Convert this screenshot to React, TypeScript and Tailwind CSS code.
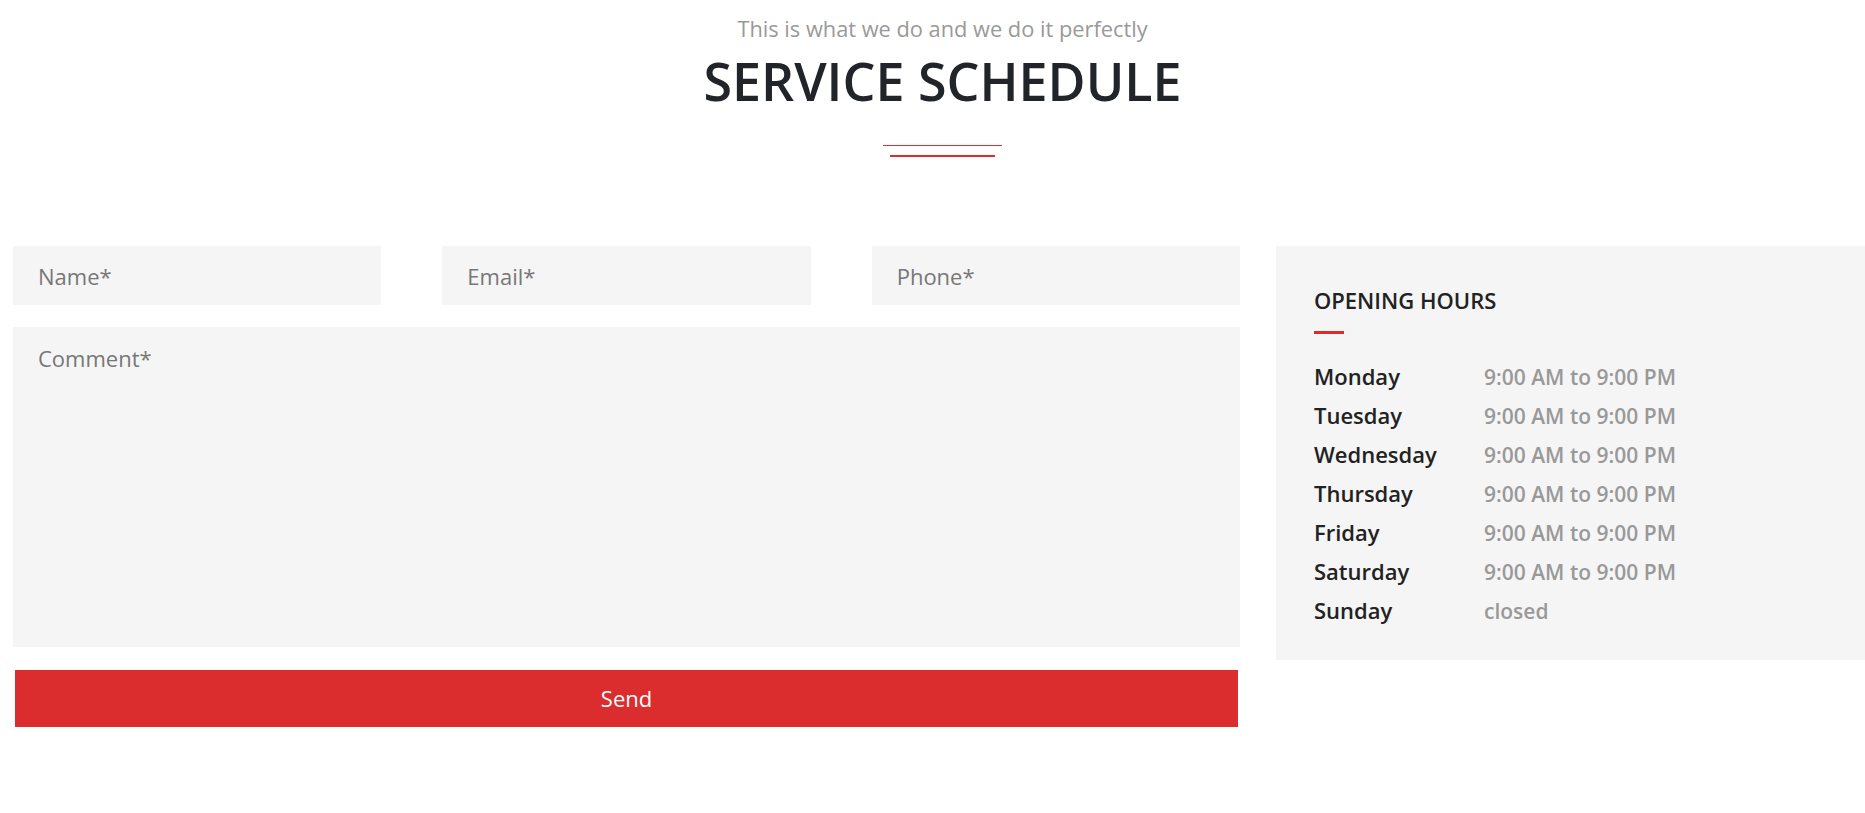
import React from "react";

const hours = [
  { day: "Monday", time: "9:00 AM to 9:00 PM" },
  { day: "Tuesday", time: "9:00 AM to 9:00 PM" },
  { day: "Wednesday", time: "9:00 AM to 9:00 PM" },
  { day: "Thursday", time: "9:00 AM to 9:00 PM" },
  { day: "Friday", time: "9:00 AM to 9:00 PM" },
  { day: "Saturday", time: "9:00 AM to 9:00 PM" },
  { day: "Sunday", time: "closed" },
];

const fieldClass =
  "w-full h-[59px] px-[25px] bg-[#f5f5f5] text-[22px] text-[#333] placeholder:text-[#777] outline-none";

export default function App() {
  return (
    <div className="w-full min-h-[813px] bg-white overflow-hidden font-['Open_Sans','Liberation_Sans',sans-serif]">
      {/* Section heading */}
      <div className="pl-[20px] pt-[15px] text-center">
        <p className="text-[21.8px] leading-[28px] text-[#999]">This is what we do and we do it perfectly</p>
        <h2 className="mt-[11px] text-[52px] leading-[54px] text-[#212529] font-semibold">SERVICE SCHEDULE</h2>
        <div className="mx-auto mt-[37px] w-[119px] h-px bg-[#db2d2e]" />
        <div className="mx-auto mt-[9px] w-[105px] h-[2px] bg-[#db2d2e]" />
      </div>

      <div className="mt-[89px] flex items-start">
        {/* Contact form */}
        <form className="ml-[13px] w-[1227px] shrink-0" onSubmit={(e) => e.preventDefault()}>
          <div className="grid grid-cols-3 gap-[61px]">
            <input type="text" placeholder="Name*" className={fieldClass} />
            <input type="email" placeholder="Email*" className={fieldClass} />
            <input type="tel" placeholder="Phone*" className={fieldClass} />
          </div>
          <textarea
            placeholder="Comment*"
            className="mt-[22px] block w-full h-[320px] px-[25px] pt-[16px] bg-[#f5f5f5] text-[22px] leading-[30px] text-[#333] placeholder:text-[#777] outline-none resize-none"
          />
          <div className="px-[2px] mt-[23px]">
            <button
              type="submit"
              className="w-full h-[57px] bg-[#db2d2e] text-white text-[22px] cursor-pointer"
            >
              Send
            </button>
          </div>
        </form>

        {/* Opening hours */}
        <div className="ml-[36px] flex-1 h-[414px] bg-[#f5f5f5] pl-[38px] pt-[39px]">
          <h3 className="text-[22px] leading-[30px] text-[#222] font-semibold">OPENING HOURS</h3>
          <div className="mt-[16px] w-[30px] h-[3px] bg-[#db2d2e]" />
          <ul className="mt-[23px]">
            {hours.map((h) => (
              <li key={h.day} className="flex items-baseline h-[39px] leading-[39px]">
                <span className="w-[170px] text-[22px] text-[#222] font-semibold">{h.day}</span>
                <span className="text-[21px] text-[#999] font-semibold">{h.time}</span>
              </li>
            ))}
          </ul>
        </div>
      </div>
    </div>
  );
}
